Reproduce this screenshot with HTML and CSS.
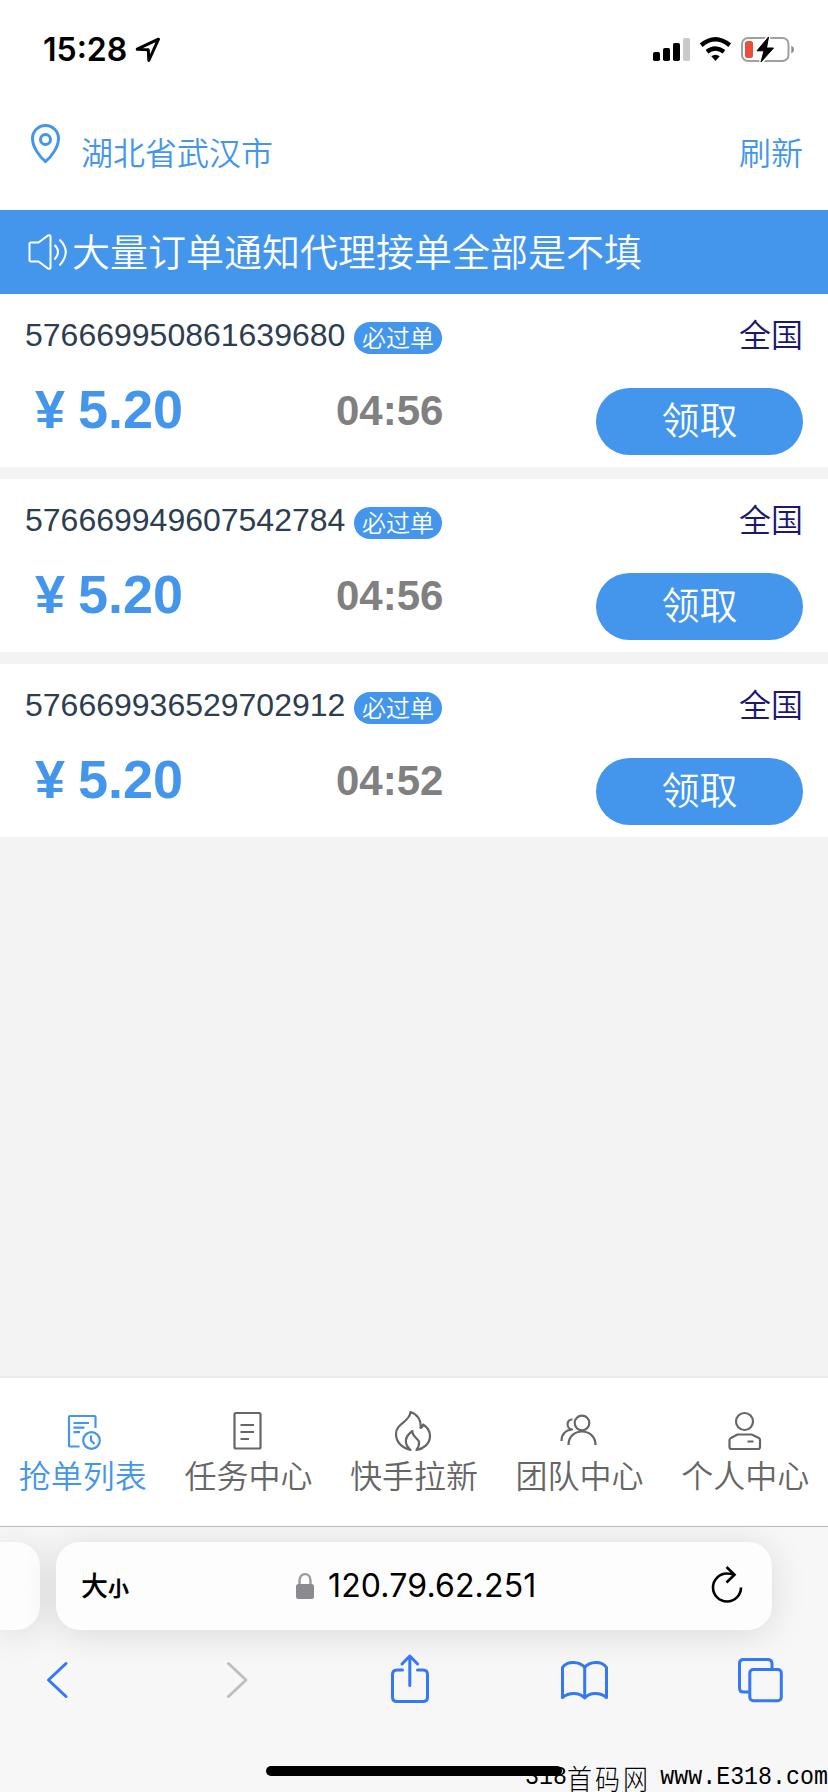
FILE: index.html
```html
<!DOCTYPE html>
<html lang="zh-CN">
<head>
<meta charset="utf-8">
<title>抢单列表</title>
<link rel="stylesheet" href="styles.css">
</head>
<body>
<div class="phone">
  <div class="status">
    <span class="clock">15:28</span>
    <svg class="nav-arrow" width="26" height="26" viewBox="0 0 26 26"><path d="M2.200 12.200 23.500 2.200 13.800 23.500 13.300 12.700Z" fill="none" stroke="#000" stroke-width="3" stroke-linejoin="round"/></svg>
    <svg class="signals" width="144" height="28" viewBox="652 36 144 28">
      <rect x="653" y="52" width="7" height="9" rx="1.8"/><rect x="663" y="48" width="7" height="13" rx="1.8"/><rect x="673" y="43" width="7" height="18" rx="1.8"/><rect x="683" y="38" width="7" height="23" rx="1.8" fill="#cacaca"/>
      <path d="M701.2 45.2Q715.4 33.3 729.7 45.2M707 51.7Q715.4 45.3 724 51.7" fill="none" stroke="#000" stroke-width="4.4"/>
      <path d="M711.3 56.2Q715.5 53.2 719.7 56.2L715.5 61Z"/>
      <rect x="742" y="38" width="46.5" height="23" rx="6" fill="none" stroke="#a0a0a0" stroke-width="2"/>
      <path d="M791.3 45.8Q794 47 794 49.5T791.3 53.5Z" fill="#888"/>
      <rect x="745" y="41" width="8" height="17" rx="2.5" fill="#eb4d3d"/>
      <path d="M768.5 37 757 50.8H764L761 62 773.5 48H766.5Z" stroke="#fff" stroke-width="4"/><path d="M768.5 37 757 50.8H764L761 62 773.5 48H766.5Z" stroke="#000" stroke-width="1" stroke-linejoin="round"/>
    </svg>
  </div>
  <header class="place">
    <svg class="pin" width="32" height="42" viewBox="0 0 32 42"><path d="M15.500 39.500C11 36 2.500 26 2.500 16.500A13 13 0 0 1 28.500 16.500C28.500 26 20 36 15.500 39.500Z"/><circle cx="15.500" cy="17.500" r="5"/></svg>
    <span class="city">湖北省武汉市</span><span class="refresh">刷新</span>
  </header>
  <div class="notice">
    <svg width="42" height="40" viewBox="0 0 42 40"><path d="M11.500 10.500H4Q2.500 10.500 2.500 12V28Q2.500 29.500 4 29.500H11.500L21 36.500Q23.500 37.500 23.500 35.500V4.500Q23.500 2.500 21 3.500ZM27.500 13Q34.500 19.500 27.500 27.500M32.500 7.500Q45 19.500 32.500 33.500"/></svg>
    <span>大量订单通知代理接单全部是不填</span>
  </div>
  <main class="orders">
    <article class="card">
      <div class="top"><span class="number">576669950861639680</span><span class="tag">必过单</span><span class="area">全国</span></div>
      <div class="bottom"><span class="price"><i>¥</i>5.20</span><span class="time">04:56</span><button class="take">领取</button></div>
    </article>
    <article class="card">
      <div class="top"><span class="number">576669949607542784</span><span class="tag">必过单</span><span class="area">全国</span></div>
      <div class="bottom"><span class="price"><i>¥</i>5.20</span><span class="time">04:56</span><button class="take">领取</button></div>
    </article>
    <article class="card">
      <div class="top"><span class="number">576669936529702912</span><span class="tag">必过单</span><span class="area">全国</span></div>
      <div class="bottom"><span class="price"><i>¥</i>5.20</span><span class="time">04:52</span><button class="take">领取</button></div>
    </article>
  </main>
  <nav class="tabs">
    <a class="tab active"><svg width="44" height="44" viewBox="0 0 44 44"><path d="M18.500 38.500H9Q8 38.500 8 37.500V9Q8 8 9 8H33.500Q34.500 8 34.500 9V20M12.500 15H28M12.500 19.600H23.500M12.500 24.200H19"/><circle cx="30.500" cy="32.500" r="8.300"/><path d="M30 27.500V32.500L33.500 36"/></svg><span>抢单列表</span></a>
    <a class="tab"><svg width="44" height="44" viewBox="0 0 44 44"><rect x="8.500" y="5" width="26" height="35.500" rx="1.500"/><path d="M14.500 17H28M14.500 24H28M14.500 31H23"/></svg><span>任务中心</span></a>
    <a class="tab"><svg width="44" height="44" viewBox="0 0 44 44"><path d="M18.500 42C10 40 4 34 4 26C4 15 18 14 18.500 4C25 6 29.500 12 28.500 20Q30.500 19.500 31 16.500C35 19 38 23 38 28C38 36 31 41 24.500 42Q27.500 38 27 34C26 30 19.500 28 20.500 23C12 29 12 36 18.500 42Z"/></svg><span>快手拉新</span></a>
    <a class="tab"><svg width="44" height="44" viewBox="0 0 44 44"><circle cx="24" cy="15" r="7.300"/><path d="M10.500 37C10.500 19 37.500 19 37.500 37M14.500 11.500C8 11 8 21 14 21.500C8 22 3.500 26 3.500 33"/></svg><span>团队中心</span></a>
    <a class="tab"><svg width="44" height="44" viewBox="0 0 44 44"><circle cx="21.500" cy="13.500" r="8.500"/><path d="M14.500 26.500H28.500L36 30Q37 30.500 37 32V39Q37 41 35 41H8.500Q6.500 41 6.500 39V32Q6.500 30.500 8 30ZM24.500 33.500H30.500"/></svg><span>个人中心</span></a>
  </nav>
  <footer class="browser">
    <div class="address-row">
      <div class="previous"></div>
      <div class="address">
        <span class="size">大<small>小</small></span>
        <span class="host"><svg width="18" height="28" viewBox="0 0 18 28"><path d="M3.500 13V8.500C3.500 0 14.500 0 14.500 8.500V13" fill="none" stroke="#99999d" stroke-width="2.400"/><rect y="12" width="18" height="15" rx="2.500" fill="#8a8a8f"/></svg>120.79.62.251</span>
        <svg class="reload" width="34" height="40" viewBox="0 0 34 40"><path d="M31 21.500A14 14 0 1 1 17 7.500Q21 7.500 24 9M16.500 1 24.500 8.700 16.500 16.500" fill="none" stroke="#000" stroke-width="2.600"/></svg>
      </div>
    </div>
    <svg class="toolbar" width="828" height="56" viewBox="0 1652 828 56">
      <path d="M66 1663.500 48.500 1680 66 1696.500"/><path d="M228.500 1663.500 246 1680 228.500 1696.500" stroke="#bfbfbf"/>
      <path d="M402.500 1670H397Q392.500 1670 392.500 1674.500V1697Q392.500 1701.500 397 1701.500H423Q427.500 1701.500 427.500 1697V1674.500Q427.500 1670 423 1670H417.500M409.800 1685.500V1656M402 1664 409.800 1656 417.600 1664"/>
      <path d="M584.700 1667.500V1697.500M562.500 1697.500V1667.500C567 1660.500 580 1661 584.700 1667.500C589.400 1661 602 1660.500 606.500 1667.500V1697.500C600 1692 590 1692 584.700 1698C579 1692 569 1692 562.500 1697.500Z"/>
      <path d="M748 1692H743.500Q739.500 1692 739.500 1688V1663.500Q739.500 1659.500 743.500 1659.500H767.500Q772 1659.500 772 1663.500V1669"/><rect x="749.800" y="1669.500" width="31.500" height="31.200" rx="3.500"/>
    </svg>
    <div class="watermark"><span>318</span><b>首码网</b><span class="site">www.E318.com</span></div>
    <div class="home"></div>
  </footer>
</div>
</body>
</html>
```
FILE: styles.css
```css
* { box-sizing: border-box; }
body { margin: 0; font-family: "Liberation Sans", "Noto Sans CJK SC", sans-serif; }
svg { display: block; flex: none; }
.phone { position: relative; width: 828px; height: 1792px; overflow: hidden; background: #f3f3f3; display: flex; flex-direction: column; }
.status { height: 100px; flex: none; background: #fff; display: flex; align-items: center; padding: 0 32px 0 43px; }
.clock { width: 84px; font: 600 32px/40px Inter, sans-serif; white-space: nowrap; }
.nav-arrow { margin-left: 8px; }
.signals { margin-left: auto; }
.place { height: 110px; flex: none; display: flex; background: #fff; color: #4396ec; padding: 22px 25px 0 30px; font: 350 32px/58px "Noto Sans CJK SC", sans-serif; }
.pin { fill: none; stroke: currentColor; stroke-width: 3; }
.city { margin-left: 19px; }
.refresh { margin-left: auto; }
.notice { height: 84px; flex: none; display: flex; align-items: center; padding-left: 27px; background: #4396ec; color: #fff; font: 350 38px/80px "Noto Sans CJK SC", sans-serif; }
.notice span { height: 84px; }
.notice svg { fill: none; stroke: #fff; stroke-width: 2; margin-right: 3px; }
.orders { flex: 1; display: flex; flex-direction: column; gap: 12px; }
.card { height: 173px; background: #fff; padding: 20px 25px 0; }
.top { height: 44px; display: flex; align-items: flex-start; }
.number { width: 321px; font-size: 32px; line-height: 43px; color: #2c3e50; }
.tag { width: 88px; height: 32px; margin: 8px 0 0 8px; border-radius: 16px; background: #4396ec; color: #fff; text-align: center; font: 350 24px/29px "Noto Sans CJK SC", sans-serif; }
.area { margin-left: auto; font: 350 32px/39px "Noto Sans CJK SC", sans-serif; color: #191970; }
.bottom { display: flex; height: 100px; padding-top: 20px; }
.price { width: 311px; padding-left: 10px; font-size: 54px; line-height: 63px; font-weight: 700; color: #4396ec; display: flex; }
.price i { width: 43px; font-style: normal; }
.time { font-size: 42px; line-height: 65px; font-weight: 700; color: gray; }
.take { width: 207px; height: 67px; margin: 10px 0 0 auto; padding: 0 0 7px; border: 0; border-radius: 34px; background: #4396ec; color: #fff; font: 350 38px/60px "Noto Sans CJK SC", sans-serif; }
.tabs { height: 151px; flex: none; display: flex; background: #fff; border-top: 2px solid #ebebef; border-bottom: 1px solid #b7b9bb; }
.tab { flex: 1; display: flex; flex-direction: column; align-items: center; padding-top: 30px; color: #666; font: 350 32px/44px "Noto Sans CJK SC", sans-serif; }
.tab svg { fill: none; stroke: currentColor; stroke-width: 2.2; stroke-linejoin: round; }
.active { color: #4396ec; }
.browser { position: relative; height: 265px; flex: none; background: #f7f7f7; overflow: hidden; }
.address-row { height: 125px; display: flex; gap: 16px; padding-top: 15px; }
.previous, .address { height: 88px; background: #fdfdfd; box-shadow: 0 4px 36px rgba(0,0,0,.12); }
.previous { width: 40px; border-radius: 0 24px 24px 0; }
.address { width: 716px; border-radius: 24px; display: flex; align-items: center; padding: 0 28px 0 25px; }
.size { width: 215px; font: 500 27px/40px "Noto Sans CJK SC", sans-serif; }
.size small { font-size: 21px; font-weight: 700; }
.host { display: flex; align-items: center; gap: 14px; font: 400 32px/40px Inter, sans-serif; letter-spacing: .15px; white-space: nowrap; }
.reload { margin-left: auto; }
.toolbar { fill: none; stroke: #3478f6; stroke-width: 3; stroke-linecap: round; stroke-linejoin: round; }
.home { position: absolute; left: 266px; top: 239px; width: 296px; height: 10px; border-radius: 5px; background: #000; }
.watermark { position: absolute; right: 0; bottom: 0; width: 303px; display: flex; align-items: center; font: 23.3px/26px "Liberation Mono", monospace; white-space: nowrap; transform: scaleY(1.12); transform-origin: bottom; }
.watermark b { font: 300 25px/26px "Noto Sans CJK SC", sans-serif; letter-spacing: 3px; }
.site { margin-left: auto; }
```
